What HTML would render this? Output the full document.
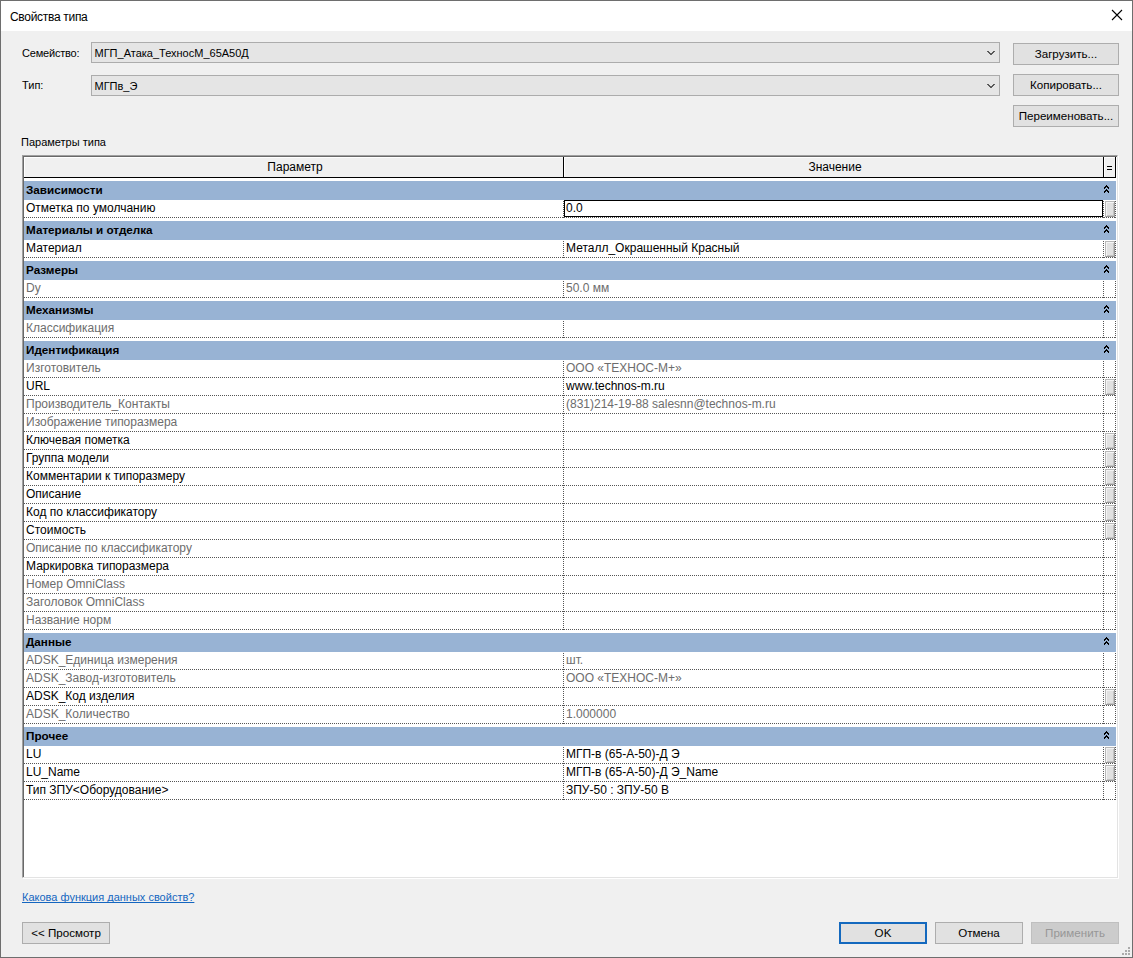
<!DOCTYPE html>
<html><head><meta charset="utf-8">
<style>
*{margin:0;padding:0;box-sizing:border-box}
html,body{width:1133px;height:958px;overflow:hidden;background:#F0F0F0}
body{position:relative;font-family:"Liberation Sans",sans-serif;font-size:12px;color:#000}
.abs{position:absolute}
#win{position:absolute;left:0;top:0;width:1133px;height:958px;border:1px solid #6E6E6E;background:#F0F0F0}
#title{position:absolute;left:0;top:0;width:1131px;height:30px;background:#fff}
#title span{position:absolute;left:9px;top:9px;font-size:12px;letter-spacing:-0.3px;line-height:14px;white-space:nowrap}
.lbl{position:absolute;white-space:nowrap;line-height:14px}
.combo{position:absolute;left:91px;width:909px;height:21px;background:#E5E5E5;border:1px solid #ACACAC}
.combo span{position:absolute;left:2.5px;top:3px;font-size:11px;line-height:14px;white-space:nowrap}
.combo svg{position:absolute;left:895px;top:8px}
.btn{position:absolute;height:22px;background:#E1E1E1;border:1px solid #ADADAD;text-align:center;line-height:19px;white-space:nowrap;font-size:11.6px}
#tbl{position:absolute;left:22px;top:155px;width:1096px;height:723px;background:#fff;
  border-top:1px solid #A0A0A0;border-left:1px solid #A0A0A0;border-right:1px solid #E3E3E3;border-bottom:1px solid #E3E3E3;
  box-shadow:1px 1px 0 0 #fff,inset 1px 1px 0 0 #696969}
#grid{position:absolute;left:24px;top:157px;width:1092px;height:720px;overflow:hidden}
.hdr{position:absolute;top:0;height:21px;background:#F0F0F0;box-shadow:inset 1px 1px 0 #fff;border-right:1px solid #000;border-bottom:1px solid #000;text-align:center;line-height:20px;padding-left:3px;white-space:nowrap}
.band{position:absolute;left:0;width:1092px;height:19px;background:#98B3D4}
.bt{position:absolute;left:2px;top:2px;font-weight:bold;font-size:11.7px;line-height:14px;white-space:nowrap}
.chev{position:absolute;left:1080px;top:4px;display:block}
.row{position:absolute;left:0;width:1092px;height:18px;background:#fff}
.row::after{content:"";position:absolute;left:0;bottom:0;width:1092px;height:1px;background:repeating-linear-gradient(to right,#555555 0 1px,transparent 1px 2px)}
.row::before{content:"";position:absolute;left:539px;top:0;width:1px;height:18px;background:repeating-linear-gradient(to bottom,transparent 0 1px,#555555 1px 2px)}
.vl{position:absolute;top:0;width:1px;height:18px;background:repeating-linear-gradient(to bottom,transparent 0 1px,#555555 1px 2px)}
.row .pt{position:absolute;left:2px;top:1px;line-height:14px;white-space:nowrap}
.row .vt{position:absolute;left:542px;top:1px;line-height:14px;white-space:nowrap}
.row.g .pt,.row.g .vt{color:#6D6D6D}
.vl2{position:absolute;width:1px;background:repeating-linear-gradient(to bottom,transparent 0 1px,#555555 1px 2px)}
.selbox{position:absolute;left:540px;top:0;width:539px;height:17px;border:1px solid #000;background:#fff}
.ebtn{position:absolute;left:1081px;top:1px;width:10px;height:16px;background:#E1E1E1;border:1px solid #B8B8B8;border-right-color:#9A9A9A;border-bottom-color:#9A9A9A;box-shadow:inset 1px 1px 0 #F4F4F4,inset -1px -1px 0 #C4C4C4}
#link{position:absolute;left:22px;top:890px;color:#1466C0;text-decoration:underline;text-decoration-skip-ink:none;font-size:11px;line-height:14px;white-space:nowrap}
.okb{border:2px solid #1469BE;line-height:17px}
.dis{background:#CCCCCC;border-color:#BFBFBF;color:#979797}
</style></head><body>
<div id="win">
 <div id="title"><span>Свойства типа</span>
  <svg class="abs" style="left:1110px;top:8px" width="12" height="12" viewBox="0 0 12 12"><path d="M1 1 L11 11 M11 1 L1 11" stroke="#000" stroke-width="1.1" fill="none"/></svg>
 </div>
</div>
<div class="lbl" style="left:22px;top:46px;font-size:11px;letter-spacing:-0.2px">Семейство:</div>
<div class="combo" style="top:42px"><span>МГП_Атака_ТехносМ_65А50Д</span><svg width="8" height="4" viewBox="0 0 8 4" shape-rendering="crispEdges" fill="#5A5A5A"><rect x="0" y="0" width="2" height="1"/><rect x="6" y="0" width="2" height="1"/><rect x="1" y="1" width="2" height="1"/><rect x="5" y="1" width="2" height="1"/><rect x="2" y="2" width="2" height="1"/><rect x="4" y="2" width="2" height="1"/><rect x="3" y="3" width="2" height="1"/></svg></div>
<div class="lbl" style="left:22px;top:78px;font-size:11px">Тип:</div>
<div class="combo" style="top:75px"><span>МГПв_Э</span><svg width="8" height="4" viewBox="0 0 8 4" shape-rendering="crispEdges" fill="#5A5A5A"><rect x="0" y="0" width="2" height="1"/><rect x="6" y="0" width="2" height="1"/><rect x="1" y="1" width="2" height="1"/><rect x="5" y="1" width="2" height="1"/><rect x="2" y="2" width="2" height="1"/><rect x="4" y="2" width="2" height="1"/><rect x="3" y="3" width="2" height="1"/></svg></div>
<div class="btn" style="left:1013px;top:43px;width:106px">Загрузить...</div>
<div class="btn" style="left:1013px;top:74px;width:106px">Копировать...</div>
<div class="btn" style="left:1013px;top:105px;width:106px">Переименовать...</div>
<div class="lbl" style="left:21px;top:135px;font-size:11px">Параметры типа</div>
<div id="tbl"></div>
<div id="grid">
 <div class="hdr" style="left:0;width:540px">Параметр</div>
 <div class="hdr" style="left:540px;width:540px">Значение</div>
 <div class="hdr" style="left:1080px;width:12px"></div>
 <svg class="abs" style="left:1083px;top:9px" width="5" height="4" viewBox="0 0 5 4" shape-rendering="crispEdges"><rect x="0" y="0" width="5" height="1" fill="#000"/><rect x="0" y="3" width="5" height="1" fill="#000"/></svg>
</div>
<div id="rows" style="position:absolute;left:24px;top:0;width:1092px;height:958px">
<div class="band" style="top:181px"><span class="bt">Зависимости</span><svg class="chev" width="5" height="8" viewBox="0 0 5 8" shape-rendering="crispEdges" fill="#000"><rect x="2" y="0" width="1" height="1"/><rect x="1" y="1" width="3" height="1"/><rect x="0" y="2" width="2" height="1"/><rect x="3" y="2" width="2" height="1"/><rect x="0" y="3" width="1" height="1"/><rect x="4" y="3" width="1" height="1"/><rect x="2" y="4" width="1" height="1"/><rect x="1" y="5" width="3" height="1"/><rect x="0" y="6" width="2" height="1"/><rect x="3" y="6" width="2" height="1"/><rect x="0" y="7" width="1" height="1"/><rect x="4" y="7" width="1" height="1"/></svg></div><div class="row" style="top:200px"><span class="pt">Отметка по умолчанию</span><div class="selbox"></div><span class="vt">0.0</span><div class="ebtn"></div><div class="vl" style="left:1079px"></div><div class="vl" style="left:1091px"></div></div><div class="band" style="top:221px"><span class="bt">Материалы и отделка</span><svg class="chev" width="5" height="8" viewBox="0 0 5 8" shape-rendering="crispEdges" fill="#000"><rect x="2" y="0" width="1" height="1"/><rect x="1" y="1" width="3" height="1"/><rect x="0" y="2" width="2" height="1"/><rect x="3" y="2" width="2" height="1"/><rect x="0" y="3" width="1" height="1"/><rect x="4" y="3" width="1" height="1"/><rect x="2" y="4" width="1" height="1"/><rect x="1" y="5" width="3" height="1"/><rect x="0" y="6" width="2" height="1"/><rect x="3" y="6" width="2" height="1"/><rect x="0" y="7" width="1" height="1"/><rect x="4" y="7" width="1" height="1"/></svg></div><div class="row" style="top:240px"><span class="pt">Материал</span><span class="vt">Металл_Окрашенный Красный</span><div class="ebtn"></div><div class="vl" style="left:1079px"></div><div class="vl" style="left:1091px"></div></div><div class="band" style="top:261px"><span class="bt">Размеры</span><svg class="chev" width="5" height="8" viewBox="0 0 5 8" shape-rendering="crispEdges" fill="#000"><rect x="2" y="0" width="1" height="1"/><rect x="1" y="1" width="3" height="1"/><rect x="0" y="2" width="2" height="1"/><rect x="3" y="2" width="2" height="1"/><rect x="0" y="3" width="1" height="1"/><rect x="4" y="3" width="1" height="1"/><rect x="2" y="4" width="1" height="1"/><rect x="1" y="5" width="3" height="1"/><rect x="0" y="6" width="2" height="1"/><rect x="3" y="6" width="2" height="1"/><rect x="0" y="7" width="1" height="1"/><rect x="4" y="7" width="1" height="1"/></svg></div><div class="row g" style="top:280px"><span class="pt">Dy</span><span class="vt">50.0 мм</span><div class="vl" style="left:1079px"></div><div class="vl" style="left:1091px"></div></div><div class="band" style="top:301px"><span class="bt">Механизмы</span><svg class="chev" width="5" height="8" viewBox="0 0 5 8" shape-rendering="crispEdges" fill="#000"><rect x="2" y="0" width="1" height="1"/><rect x="1" y="1" width="3" height="1"/><rect x="0" y="2" width="2" height="1"/><rect x="3" y="2" width="2" height="1"/><rect x="0" y="3" width="1" height="1"/><rect x="4" y="3" width="1" height="1"/><rect x="2" y="4" width="1" height="1"/><rect x="1" y="5" width="3" height="1"/><rect x="0" y="6" width="2" height="1"/><rect x="3" y="6" width="2" height="1"/><rect x="0" y="7" width="1" height="1"/><rect x="4" y="7" width="1" height="1"/></svg></div><div class="row g" style="top:320px"><span class="pt">Классификация</span><span class="vt"></span><div class="vl" style="left:1079px"></div><div class="vl" style="left:1091px"></div></div><div class="band" style="top:341px"><span class="bt">Идентификация</span><svg class="chev" width="5" height="8" viewBox="0 0 5 8" shape-rendering="crispEdges" fill="#000"><rect x="2" y="0" width="1" height="1"/><rect x="1" y="1" width="3" height="1"/><rect x="0" y="2" width="2" height="1"/><rect x="3" y="2" width="2" height="1"/><rect x="0" y="3" width="1" height="1"/><rect x="4" y="3" width="1" height="1"/><rect x="2" y="4" width="1" height="1"/><rect x="1" y="5" width="3" height="1"/><rect x="0" y="6" width="2" height="1"/><rect x="3" y="6" width="2" height="1"/><rect x="0" y="7" width="1" height="1"/><rect x="4" y="7" width="1" height="1"/></svg></div><div class="row g" style="top:360px"><span class="pt">Изготовитель</span><span class="vt">ООО «ТЕХНОС-М+»</span><div class="vl" style="left:1079px"></div><div class="vl" style="left:1091px"></div></div><div class="row" style="top:378px"><span class="pt">URL</span><span class="vt">www.technos-m.ru</span><div class="ebtn"></div><div class="vl" style="left:1079px"></div><div class="vl" style="left:1091px"></div></div><div class="row g" style="top:396px"><span class="pt">Производитель_Контакты</span><span class="vt">(831)214-19-88 salesnn@technos-m.ru</span><div class="vl" style="left:1079px"></div><div class="vl" style="left:1091px"></div></div><div class="row g" style="top:414px"><span class="pt">Изображение типоразмера</span><span class="vt"></span><div class="vl" style="left:1079px"></div><div class="vl" style="left:1091px"></div></div><div class="row" style="top:432px"><span class="pt">Ключевая пометка</span><span class="vt"></span><div class="ebtn"></div><div class="vl" style="left:1079px"></div><div class="vl" style="left:1091px"></div></div><div class="row" style="top:450px"><span class="pt">Группа модели</span><span class="vt"></span><div class="ebtn"></div><div class="vl" style="left:1079px"></div><div class="vl" style="left:1091px"></div></div><div class="row" style="top:468px"><span class="pt">Комментарии к типоразмеру</span><span class="vt"></span><div class="ebtn"></div><div class="vl" style="left:1079px"></div><div class="vl" style="left:1091px"></div></div><div class="row" style="top:486px"><span class="pt">Описание</span><span class="vt"></span><div class="ebtn"></div><div class="vl" style="left:1079px"></div><div class="vl" style="left:1091px"></div></div><div class="row" style="top:504px"><span class="pt">Код по классификатору</span><span class="vt"></span><div class="ebtn"></div><div class="vl" style="left:1079px"></div><div class="vl" style="left:1091px"></div></div><div class="row" style="top:522px"><span class="pt">Стоимость</span><span class="vt"></span><div class="ebtn"></div><div class="vl" style="left:1079px"></div><div class="vl" style="left:1091px"></div></div><div class="row g" style="top:540px"><span class="pt">Описание по классификатору</span><span class="vt"></span><div class="vl" style="left:1079px"></div><div class="vl" style="left:1091px"></div></div><div class="row" style="top:558px"><span class="pt">Маркировка типоразмера</span><span class="vt"></span><div class="vl" style="left:1079px"></div><div class="vl" style="left:1091px"></div></div><div class="row g" style="top:576px"><span class="pt">Номер OmniClass</span><span class="vt"></span><div class="vl" style="left:1079px"></div><div class="vl" style="left:1091px"></div></div><div class="row g" style="top:594px"><span class="pt">Заголовок OmniClass</span><span class="vt"></span><div class="vl" style="left:1079px"></div><div class="vl" style="left:1091px"></div></div><div class="row g" style="top:612px"><span class="pt">Название норм</span><span class="vt"></span><div class="vl" style="left:1079px"></div><div class="vl" style="left:1091px"></div></div><div class="band" style="top:633px"><span class="bt">Данные</span><svg class="chev" width="5" height="8" viewBox="0 0 5 8" shape-rendering="crispEdges" fill="#000"><rect x="2" y="0" width="1" height="1"/><rect x="1" y="1" width="3" height="1"/><rect x="0" y="2" width="2" height="1"/><rect x="3" y="2" width="2" height="1"/><rect x="0" y="3" width="1" height="1"/><rect x="4" y="3" width="1" height="1"/><rect x="2" y="4" width="1" height="1"/><rect x="1" y="5" width="3" height="1"/><rect x="0" y="6" width="2" height="1"/><rect x="3" y="6" width="2" height="1"/><rect x="0" y="7" width="1" height="1"/><rect x="4" y="7" width="1" height="1"/></svg></div><div class="row g" style="top:652px"><span class="pt">ADSK_Единица измерения</span><span class="vt">шт.</span><div class="vl" style="left:1079px"></div><div class="vl" style="left:1091px"></div></div><div class="row g" style="top:670px"><span class="pt">ADSK_Завод-изготовитель</span><span class="vt">ООО «ТЕХНОС-М+»</span><div class="vl" style="left:1079px"></div><div class="vl" style="left:1091px"></div></div><div class="row" style="top:688px"><span class="pt">ADSK_Код изделия</span><span class="vt"></span><div class="ebtn"></div><div class="vl" style="left:1079px"></div><div class="vl" style="left:1091px"></div></div><div class="row g" style="top:706px"><span class="pt">ADSK_Количество</span><span class="vt">1.000000</span><div class="vl" style="left:1079px"></div><div class="vl" style="left:1091px"></div></div><div class="band" style="top:727px"><span class="bt">Прочее</span><svg class="chev" width="5" height="8" viewBox="0 0 5 8" shape-rendering="crispEdges" fill="#000"><rect x="2" y="0" width="1" height="1"/><rect x="1" y="1" width="3" height="1"/><rect x="0" y="2" width="2" height="1"/><rect x="3" y="2" width="2" height="1"/><rect x="0" y="3" width="1" height="1"/><rect x="4" y="3" width="1" height="1"/><rect x="2" y="4" width="1" height="1"/><rect x="1" y="5" width="3" height="1"/><rect x="0" y="6" width="2" height="1"/><rect x="3" y="6" width="2" height="1"/><rect x="0" y="7" width="1" height="1"/><rect x="4" y="7" width="1" height="1"/></svg></div><div class="row" style="top:746px"><span class="pt">LU</span><span class="vt">МГП-в (65-А-50)-Д Э</span><div class="ebtn"></div><div class="vl" style="left:1079px"></div><div class="vl" style="left:1091px"></div></div><div class="row" style="top:764px"><span class="pt">LU_Name</span><span class="vt">МГП-в (65-А-50)-Д Э_Name</span><div class="ebtn"></div><div class="vl" style="left:1079px"></div><div class="vl" style="left:1091px"></div></div><div class="row" style="top:782px"><span class="pt">Тип ЗПУ&lt;Оборудование&gt;</span><span class="vt">ЗПУ-50 : ЗПУ-50 В</span><div class="vl" style="left:1079px"></div><div class="vl" style="left:1091px"></div></div>
</div>
<div id="link">Какова функция данных свойств?</div>
<div class="btn" style="left:22px;top:922px;width:88px">&lt;&lt; Просмотр</div>
<div class="btn okb" style="left:839px;top:922px;width:88px">OK</div>
<div class="btn" style="left:935px;top:922px;width:88px">Отмена</div>
<div class="btn dis" style="left:1031px;top:922px;width:88px">Применить</div>
<div class="abs" style="left:1128px;top:947px;width:2px;height:2px;background:#ABABAB"></div><div class="abs" style="left:1125px;top:950px;width:2px;height:2px;background:#ABABAB"></div><div class="abs" style="left:1128px;top:950px;width:2px;height:2px;background:#ABABAB"></div><div class="abs" style="left:1122px;top:953px;width:2px;height:2px;background:#ABABAB"></div><div class="abs" style="left:1125px;top:953px;width:2px;height:2px;background:#ABABAB"></div><div class="abs" style="left:1128px;top:953px;width:2px;height:2px;background:#ABABAB"></div>
</body></html>
